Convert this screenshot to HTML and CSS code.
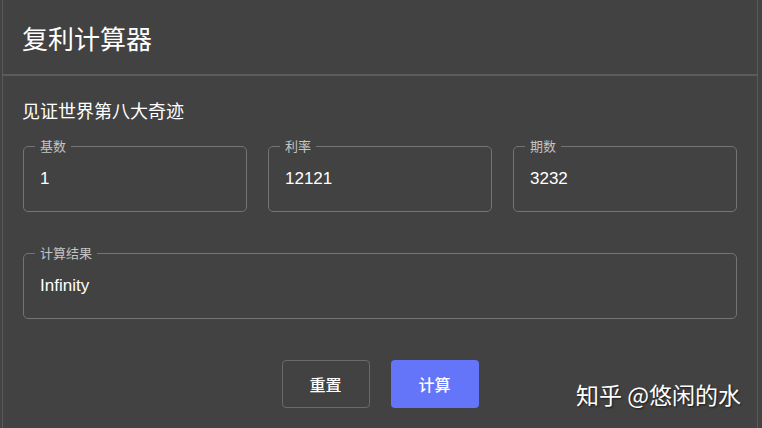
FILE: index.html
```html
<!DOCTYPE html>
<html>
<head>
<meta charset="utf-8">
<link rel="stylesheet" href="styles.css">
</head>
<body>
  <div class="dialog">
    <div class="dialog__title">复利计算器</div>
    <div class="dialog__content">
      <div class="dialog__subtitle">见证世界第八大奇迹</div>
      <div class="dialog__row">
        <label class="field">
          <span class="field__label">基数</span>
          <input class="field__input" value="1">
        </label>
        <label class="field">
          <span class="field__label">利率</span>
          <input class="field__input" value="12121">
        </label>
        <label class="field">
          <span class="field__label">期数</span>
          <input class="field__input" value="3232">
        </label>
      </div>
      <label class="field field_wide">
        <span class="field__label">计算结果</span>
        <input class="field__input" value="Infinity" readonly>
      </label>
      <div class="dialog__actions">
        <button class="btn btn_outline">重置</button>
        <button class="btn btn_primary">计算</button>
      </div>
    </div>
    <div class="watermark">知乎 @悠闲的水</div>
  </div>
</body>
</html>
```

FILE: styles.css
```css
body {
    margin: 0;
    background: #434343;
    font-family: "Liberation Sans", "Noto Sans CJK SC", sans-serif;
    color: #fff;
    overflow: hidden;
}

.dialog {
    position: relative;
    height: 100vh;
    margin: 0 4px 0 2px;
    border-left: 1px solid #5a5a5a;
    border-right: 1px solid #5a5a5a;
    background: #424242;
}

.dialog__title {
    height: 74px;
    display: flex;
    align-items: center;
    padding: 0 20px 0 19px;
    font-family: "Noto Sans CJK SC", sans-serif;
    font-size: 26px;
    border-bottom: 2px solid #5c5c5c;
}

.dialog__content {
    padding: 22px 20px 0;
}

.dialog__subtitle {
    font-family: "Noto Sans CJK SC", sans-serif;
    font-size: 18px;
    line-height: 24px;
    margin-bottom: 24px;
    margin-left: -1px;
}

.dialog__row {
    display: grid;
    grid-template-columns: repeat(3, 1fr);
    gap: 21px;
    margin-bottom: 41px;
}

.field {
    position: relative;
    display: flex;
    align-items: center;
    height: 66px;
    padding: 0 16px;
    box-sizing: border-box;
    border: 1px solid #747474;
    border-radius: 5px;
}

.field__label {
    position: absolute;
    top: -9px;
    left: 11px;
    padding: 0 5px;
    background: #424242;
    font-family: "Noto Sans CJK SC", sans-serif;
    font-size: 13px;
    line-height: 16px;
    color: #c4c4c4;
}

.field__input {
    width: 100%;
    padding: 0;
    border: none;
    background: transparent;
    color: #fff;
    font-family: "Liberation Sans", sans-serif;
    font-size: 17px;
    outline: none;
}

.dialog__actions {
    display: flex;
    justify-content: center;
    gap: 21px;
    margin-top: 41px;
}

.btn {
    width: 88px;
    height: 48px;
    border-radius: 4px;
    font-family: "Noto Sans CJK SC", sans-serif;
    font-size: 16px;
    font-weight: 500;
    color: #fff;
    cursor: pointer;
}

.btn_outline {
    background: transparent;
    border: 1px solid #6a6a6a;
}

.btn_primary {
    background: #6475fa;
    border: none;
}

.watermark {
    position: absolute;
    right: 16px;
    top: 377px;
    font-family: "Noto Sans CJK SC", sans-serif;
    font-size: 23px;
    color: #fff;
    text-shadow: 1px 1px 2px rgba(0, 0, 0, 0.6);
}
```
